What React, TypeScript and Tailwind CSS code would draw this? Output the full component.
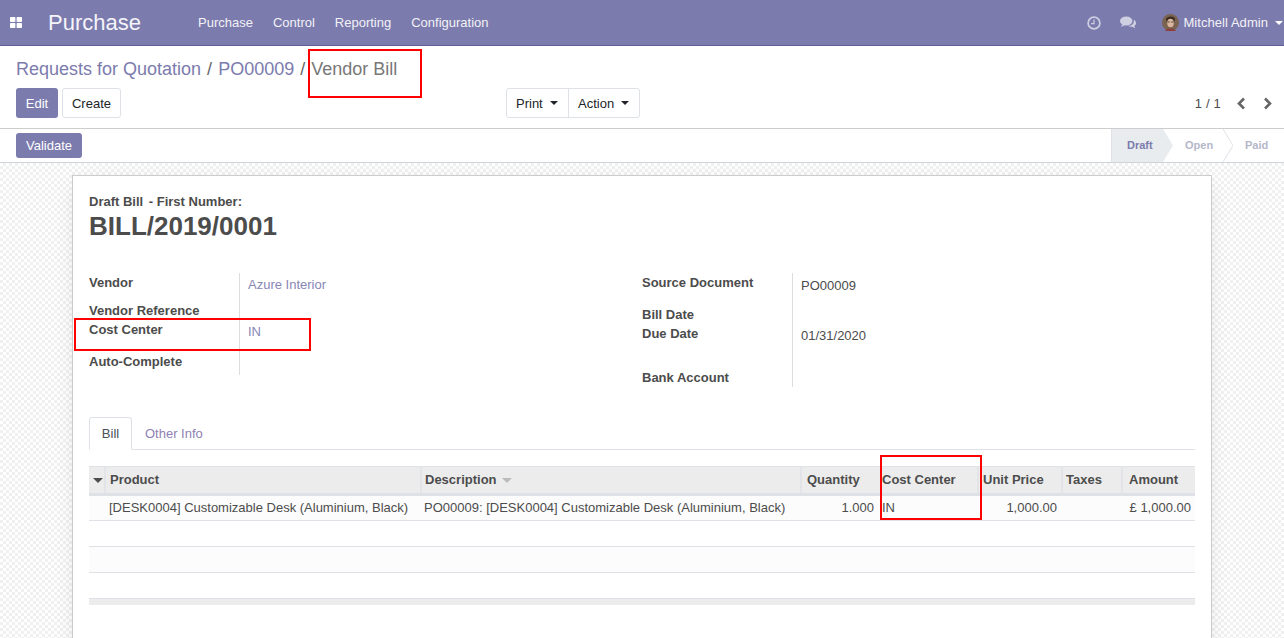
import React from "react";

const font = { fontFamily: '"Liberation Sans", Arial, sans-serif' };

function Caret({ className = "" }: { className?: string }) {
  return <span className={"inline-block w-0 h-0 border-x-[4px] border-x-transparent border-t-[4px] border-t-current " + className} />;
}

function Label({ children, className = "" }: { children: React.ReactNode; className?: string }) {
  return <div className={"text-[13px] font-bold text-[#4c4c4c] leading-[19px] " + className}>{children}</div>;
}

const heads: [string, string][] = [
  ["", "pl-0"],
  ["Product", "pl-[4px]"],
  ["Description", "pl-[3px]"],
  ["Quantity", "pl-[5px]"],
  ["Cost Center", "pl-0"],
  ["Unit Price", "pl-[4px]"],
  ["Taxes", "pl-[3px]"],
  ["Amount", "pl-[6px]"],
];

export default function App() {
  return (
    <div style={font} className="relative w-[1284px] h-[638px] overflow-hidden bg-white text-[13px] text-[#4c4c4c]">
      {/* navbar */}
      <div className="flex items-center h-[46px] bg-[#7c7bad] border-b border-b-[#5f5e97] text-white">
        <svg viewBox="0 0 12 11" className="ml-[10px] w-[12px] h-[11px] fill-white"><rect width="5.4" height="5" rx="0.8" /><rect x="6.6" width="5.4" height="5" rx="0.8" /><rect y="6" width="5.4" height="5" rx="0.8" /><rect x="6.6" y="6" width="5.4" height="5" rx="0.8" /></svg>
        <div className="ml-[26px] w-[150px] text-[22px] leading-none text-[#f4f4f9]">Purchase</div>
        <div className="flex gap-[20px] text-[#f2f2f7] leading-none">
          <span>Purchase</span><span>Control</span><span>Reporting</span><span>Configuration</span>
        </div>
        <div className="ml-auto flex items-center">
          <svg viewBox="0 0 14 14" className="w-[14px] h-[14px] fill-none stroke-[#cfcfe2]" strokeWidth="1.7"><circle cx="7" cy="7" r="5.9" /><path d="M7 3.5V7.6H4" strokeWidth="1.2" /></svg>
          <svg viewBox="0 0 16 13" className="ml-[19px] w-[16px] h-[13px] fill-[#cfcfe2]"><ellipse cx="6.2" cy="5" rx="6.2" ry="4.6" /><path d="M2.5 8l-1.5 3 4-2z" /><path d="M13.7 3.4C15 4.2 16 5.4 16 6.9c0 1.2-.7 2.3-1.7 3l.9 2.4-3.1-1.6c-1.5.2-3-.1-4.2-.9 3.7.2 6.7-2.3 5.8-6.4z" /></svg>
          <svg viewBox="0 0 17 17" className="ml-[26px] w-[17px] h-[17px]">
            <circle cx="8.5" cy="8.5" r="8.5" fill="#7a6350" />
            <path d="M4 5c1-3 8-3.500 9 0l-.5 2.500H4.500z" fill="#3a2a22" />
            <ellipse cx="8.5" cy="9" rx="3.3" ry="4.2" fill="#d8b6a0" />
            <path d="M5.500 8h2.200M9.300 8h2.200" stroke="#3a2a22" strokeWidth="0.8" />
            <path d="M3 17c1-3.500 10-3.500 11 0z" fill="#8d3f3a" />
          </svg>
          <span className="ml-[4px] text-[#f2f2f7] leading-none tracking-[0.05px]">Mitchell Admin</span>
          <Caret className="ml-[7px] mr-[1px] text-white" />
        </div>
      </div>

      {/* control panel */}
      <div className="h-[83px] border-b border-b-[#ccc] pl-[16px] pr-[8px] pt-[11px] relative">
        <div className="flex items-center text-[18px] leading-[25px] text-[#7c7bad]">
          <span>Requests for Quotation</span>
          <span className="mx-[6px] text-[#666]">/</span>
          <span>PO00009</span>
          <span className="ml-[6px] mr-[6px] text-[#666]">/</span>
          <span className="text-[#777]">Vendor Bill</span>
        </div>
        <div className="flex items-start mt-[6px]">
          <div className="flex gap-[4px] w-[490px]">
            <div className="flex items-center justify-center w-[42px] h-[30px] pt-px rounded-[3px] bg-[#7c7bad] text-white">Edit</div>
            <div className="flex items-center justify-center w-[59px] h-[30px] pt-px rounded-[3px] bg-white border border-[#dee2e6] text-[#212529]">Create</div>
          </div>
          <div className="flex h-[30px] border border-[#dee2e6] rounded-[3px] text-[#212529]">
            <div className="flex items-center w-[62px] pl-[9px] pt-px border-r border-r-[#dee2e6]">Print<Caret className="ml-[7px] -translate-y-[1px]" /></div>
            <div className="flex items-center w-[70px] pl-[9px] pt-px">Action<Caret className="ml-[7px] -translate-y-[1px]" /></div>
          </div>
          <div className="ml-auto flex items-center h-[30px] pr-[3px]">
            <span className="pt-px text-[#4c4c4c] tracking-[0.2px]">1 / 1</span>
            <svg viewBox="0 0 10 13" className="ml-[15px] w-[10px] h-[13px] fill-none stroke-[#666]" strokeWidth="2.6"><path d="M8 1.500L3 6.500l5 5" /></svg>
            <svg viewBox="0 0 10 13" className="ml-[17px] w-[10px] h-[13px] fill-none stroke-[#666]" strokeWidth="2.6"><path d="M2 1.500l5 5-5 5" /></svg>
          </div>
        </div>
      </div>

      {/* status bar */}
      <div className="flex items-center h-[34px] pl-[16px] border-b border-b-[#ced4da] relative">
        <div className="flex items-center justify-center w-[66px] h-[25px] rounded-[3px] bg-[#7c7bad] text-white">Validate</div>
        <div className="ml-auto flex h-full text-[11px] font-bold">
          <div className="flex items-center w-[52px] pl-[15px] bg-[#e9ecef] border-l border-l-[#dee2e6] text-[#7c7bad]">Draft</div>
          <svg viewBox="0 0 10 33" className="w-[10px] h-[33px]"><path d="M0 0l10 16.5L0 33z" fill="#e9ecef" /></svg>
          <div className="flex items-center w-[50px] pl-[12px] text-[#b4b7c9]">Open</div>
          <svg viewBox="0 0 10 33" className="w-[10px] h-[33px] fill-none stroke-[#dee2e6]"><path d="M0 0l10 16.5L0 33" /></svg>
          <div className="flex items-center w-[51px] pl-[12px] text-[#b4b7c9]">Paid</div>
        </div>
      </div>

      {/* content */}
      <div className="h-[475px] pt-[13px] px-[72px] bg-[#f9f9f9] bg-[repeating-conic-gradient(#f0f0f0_0%_25%,#ffffff_0%_50%)] bg-[length:6px_6px]">
        <div className="w-[1140px] h-[480px] -mt-px bg-white border border-[#ccc] shadow-[0_5px_20px_-5px_rgba(0,0,0,0.14)] pl-[16px] pr-[16px] pt-[16px]">
          <Label className="leading-[15px]"><span className="mr-[2px]">Draft Bill</span> - First Number:</Label>
          <div className="text-[26px] font-bold leading-[30px] text-[#4c4c4c]">BILL/2019/0001</div>

          <div className="flex mt-[32px]">
            <div className="w-[553px] flex">
              <div className="w-[150px] h-[102px]">
                <Label className="pt-0">Vendor</Label>
                <Label className="mt-[9px]">Vendor Reference</Label>
                <Label className="mt-0">Cost Center</Label>
                <Label className="mt-[13px]">Auto-Complete</Label>
              </div>
              <div className="border-l border-l-[#ddd] pl-[8px] h-[102px] text-[#8786b6]">
                <div className="mt-[2px] leading-[19px]">Azure Interior</div>
                <div className="mt-[28px] leading-[19px] text-[#8786b6]">IN</div>
              </div>
            </div>
            <div className="flex">
              <div className="w-[150px]">
                <Label>Source Document</Label>
                <Label className="mt-[13px]">Bill Date</Label>
                <Label className="mt-0">Due Date</Label>
                <Label className="mt-[25px]">Bank Account</Label>
              </div>
              <div className="border-l border-l-[#ddd] pl-[8px] h-[114px] text-[#4c4c4c]">
                <div className="mt-[3px] leading-[19px]">PO00009</div>
                <div className="mt-[31px] leading-[19px]">01/31/2020</div>
              </div>
            </div>
          </div>

          {/* tabs */}
          <div className="flex mt-[30px] h-[33px] border-b border-b-[#dee2e6]">
            <div className="flex items-center justify-center w-[43px] h-[33px] bg-white border border-[#dee2e6] border-b-white rounded-t-[3px] text-[#495057]">Bill</div>
            <div className="flex items-center pl-[13px] pt-px text-[#8f7fb3]">Other Info</div>
          </div>

          {/* table */}
          <table className="table-fixed w-[1106px] mt-[16px] border-collapse">
            <colgroup>
              <col className="w-[16px]" /><col className="w-[316px]" /><col className="w-[380px]" /><col className="w-[80px]" />
              <col className="w-[97px]" /><col className="w-[84px]" /><col className="w-[60px]" /><col className="w-[73px]" />
            </colgroup>
            <thead>
              <tr className="h-[28px] bg-[#ececec] border-t border-t-[#dee2e6] border-b-[3px] border-b-[#dee2e6]">
                {heads.map(([h, c], i) => (
                  <th key={i} className={"p-0 text-left font-bold border-l-2 first:border-l-0 border-l-[#e2e4e8] " + c}>
                    {i === 0 ? <Caret className="ml-[4px] -translate-y-[1px] border-x-[5px] border-t-[5px] text-[#4c4c4c]" /> : h}
                    {h === "Description" && <Caret className="ml-[5px] -translate-y-[1px] border-x-[5px] border-t-[5px] text-[#bbb]" />}
                  </th>
                ))}
              </tr>
            </thead>
            <tbody>
              <tr className="h-[26px] bg-[#fcfcfc] border-b border-b-[#dee2e6]">
                <td />
                <td className="pl-[4px] whitespace-nowrap">[DESK0004] Customizable Desk (Aluminium, Black)</td>
                <td className="pl-[3px] whitespace-nowrap">PO00009: [DESK0004] Customizable Desk (Aluminium, Black)</td>
                <td className="pr-[7px] text-right">1.000</td>
                <td className="pl-[1px]">IN</td>
                <td className="pr-[5px] text-right">1,000.00</td>
                <td />
                <td className="pr-[4px] text-right">£ 1,000.00</td>
              </tr>
              <tr className="h-[26px] border-b border-b-[#dee2e6]"><td colSpan={8} /></tr>
              <tr className="h-[26px] bg-[#fcfcfc] border-b border-b-[#dee2e6]"><td colSpan={8} /></tr>
              <tr className="h-[26px] border-b border-b-[#dee2e6]"><td colSpan={8} /></tr>
            </tbody>
            <tfoot><tr className="h-[6px] bg-[#ececec]"><td colSpan={8} /></tr></tfoot>
          </table>
        </div>
      </div>

      {/* red annotation boxes */}
      <div className="absolute left-[308px] top-[49px] w-[114px] h-[49px] border-2 border-[#f00]" />
      <div className="absolute left-[74px] top-[318px] w-[237px] h-[33px] border-2 border-[#f00]" />
      <div className="absolute left-[880px] top-[455px] w-[102px] h-[65px] border-2 border-[#f00]" />
    </div>
  );
}
